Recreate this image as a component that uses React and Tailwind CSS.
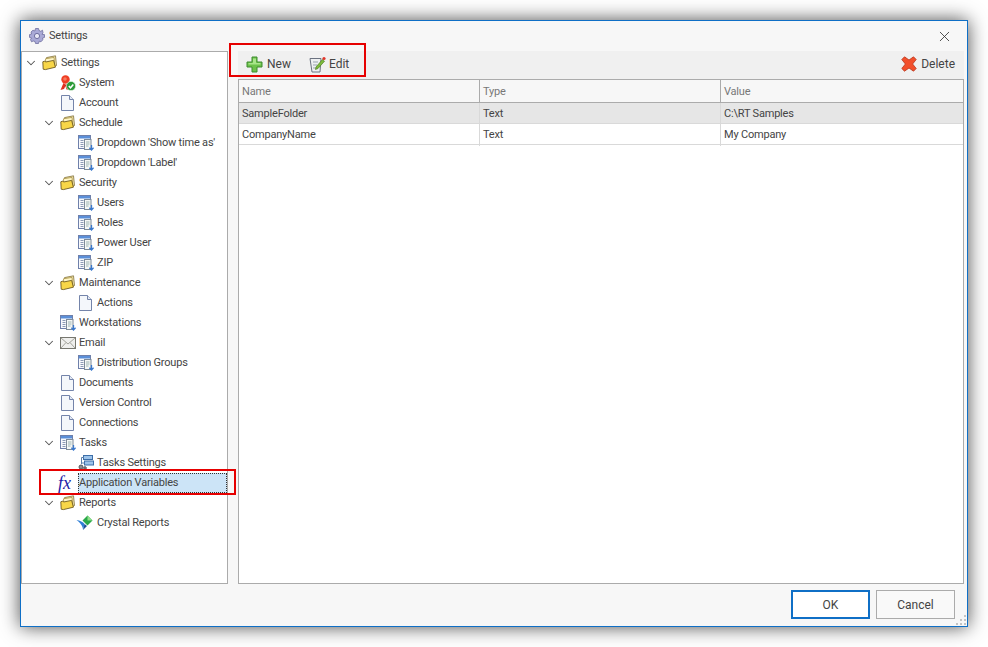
import React from "react";
import { ChevronDown, X } from "lucide-react";

const FolderIcon = () => (
  <svg width="16" height="16" viewBox="0 0 16 16" className="shrink-0">
    <path d="M4.5 4 L4.5 2.6 L13.5 0.8 L14.5 10.5 L12.5 11.5 Z" fill="#f3e6ae" stroke="#80703a" strokeWidth="0.8" />
    <path d="M3.5 5 L3.5 3.8 L12 2.4 L12.8 11.5 L4 13 Z" fill="#fff6c8" stroke="#a08a3a" strokeWidth="0.7" />
    <path d="M0.8 6.8 L2.8 6 L3.6 7 L11.6 5.4 L13.4 12.2 L3.4 14.6 L1.2 14.2 Z" fill="#f8d648" stroke="#6e5a20" strokeWidth="0.9" />
  </svg>
);

const DocIcon = () => (
  <svg width="16" height="16" viewBox="0 0 16 16" className="shrink-0">
    <path d="M1.5 0.5 H9.5 L13.5 4.5 V15.5 H1.5 Z" fill="#f4f7fb" stroke="#7484aa" />
    <path d="M9.5 0.5 V4.5 H13.5" fill="#e3e9f4" stroke="#7484aa" />
  </svg>
);

const ListDocIcon = () => (
  <svg width="16" height="16" viewBox="0 0 16 16" className="shrink-0">
    <rect x="0.5" y="0.5" width="12" height="13" fill="#f8f9fc" stroke="#6f80aa" />
    <rect x="1" y="1" width="11" height="2.5" fill="#5b8fd8" />
    <path d="M2.5 5.5 H5.5 M2.5 7.5 H5.5 M2.5 9.5 H5.5 M2.5 11.5 H5.5" stroke="#8d9ab5" />
    <rect x="6.5" y="4.5" width="6.5" height="10" fill="#f5f7f5" stroke="#7d8a98" />
    <path d="M8 7 H11.5 M8 9 H11.5 M8 11 H10.5" stroke="#9db4b4" />
    <path d="M13.5 10 V14 M11.4 12.8 L13.5 15 L15.6 12.8" fill="none" stroke="#3a78cc" strokeWidth="1.3" />
  </svg>
);

const SystemIcon = () => (
  <svg width="16" height="16" viewBox="0 0 16 16" className="shrink-0">
    <path d="M3.5 8 L0.5 15 L4 14 L6 10 Z" fill="#e0301e" />
    <path d="M6.5 9 L9 14.5 L6.5 14.5 L5 10 Z" fill="#c9281a" />
    <circle cx="5.5" cy="4.5" r="4.2" fill="#ef3e24" />
    <circle cx="5" cy="4" r="1.8" fill="#f77a5e" />
    <circle cx="11" cy="11" r="4.6" fill="#2c9a37" stroke="#e8f5e8" strokeWidth="0.6" />
    <path d="M8.8 11 L10.5 12.8 L13.3 9.4" fill="none" stroke="#fff" strokeWidth="1.5" />
  </svg>
);

const MailIcon = () => (
  <svg width="16" height="16" viewBox="0 0 16 16" className="shrink-0">
    <rect x="0.5" y="2.5" width="15" height="11" fill="#efefed" stroke="#77776f" />
    <path d="M1 3 L8 9 L15 3 M1 13 L6 7.5 M15 13 L10 7.5" fill="none" stroke="#a3a39b" />
  </svg>
);

const TaskSettingsIcon = () => (
  <svg width="16" height="16" viewBox="0 0 16 16" className="shrink-0">
    <rect x="5.5" y="0.5" width="9" height="4" fill="#9cc3ea" stroke="#3d6ea8" />
    <rect x="6.5" y="6" width="9" height="4" fill="#9cc3ea" stroke="#3d6ea8" />
    <path d="M6 2.5 H3.5 V9 M3.5 8 H6.5" fill="none" stroke="#5a7ea8" />
    <circle cx="3" cy="12" r="2" fill="#8b8f96" stroke="#55585e" />
    <circle cx="7" cy="13" r="1.3" fill="#8b8f96" stroke="#55585e" />
  </svg>
);

const CrystalIcon = () => (
  <svg width="18" height="16" viewBox="0 0 18 16" className="shrink-0 ml-[-2px]">
    <path d="M0.5 5 C4 5.5 7 7 8.5 9 L7 15 C7 11 4 7.5 0.5 5 Z" fill="#2f7fd6" />
    <path d="M8.5 9 L11 11 L7 15 Z" fill="#1b4f96" />
    <path d="M11.5 0.5 L16.5 5.5 L11.5 10.5 L6.5 5.5 Z" fill="#2aa84a" />
    <path d="M11.5 0.5 L16.5 5.5 L11.5 5.5 Z" fill="#8fe08a" />
  </svg>
);

const FxIcon = () => (
  <span className="ml-[-2px] w-4 shrink-0 font-['Liberation_Serif',serif] text-[18px] italic leading-none tracking-normal text-[#1c1ca8]">
    fx
  </span>
);

const icons = {
  folder: FolderIcon,
  doc: DocIcon,
  list: ListDocIcon,
  system: SystemIcon,
  mail: MailIcon,
  tasks: TaskSettingsIcon,
  crystal: CrystalIcon,
  fx: FxIcon,
};

const treeItems = [
  { label: "Settings", icon: "folder", level: 0, open: true },
  { label: "System", icon: "system", level: 1 },
  { label: "Account", icon: "doc", level: 1 },
  { label: "Schedule", icon: "folder", level: 1, open: true },
  { label: "Dropdown 'Show time as'", icon: "list", level: 2 },
  { label: "Dropdown 'Label'", icon: "list", level: 2 },
  { label: "Security", icon: "folder", level: 1, open: true },
  { label: "Users", icon: "list", level: 2 },
  { label: "Roles", icon: "list", level: 2 },
  { label: "Power User", icon: "list", level: 2 },
  { label: "ZIP", icon: "list", level: 2 },
  { label: "Maintenance", icon: "folder", level: 1, open: true },
  { label: "Actions", icon: "doc", level: 2 },
  { label: "Workstations", icon: "list", level: 1 },
  { label: "Email", icon: "mail", level: 1, open: true },
  { label: "Distribution Groups", icon: "list", level: 2 },
  { label: "Documents", icon: "doc", level: 1 },
  { label: "Version Control", icon: "doc", level: 1 },
  { label: "Connections", icon: "doc", level: 1 },
  { label: "Tasks", icon: "list", level: 1, open: true },
  { label: "Tasks Settings", icon: "tasks", level: 2 },
  { label: "Application Variables", icon: "fx", level: 1, selected: true },
  { label: "Reports", icon: "folder", level: 1, open: true },
  { label: "Crystal Reports", icon: "crystal", level: 2 },
];

const levelPadding = ["pl-[2px]", "pl-[20px]", "pl-[38px]"];

const rows = [
  { name: "SampleFolder", type: "Text", value: "C:\\RT Samples", active: true },
  { name: "CompanyName", type: "Text", value: "My Company" },
];

const TreeRow = ({ item }) => {
  const Icon = icons[item.icon];
  return (
    <div className={`flex h-5 items-center whitespace-nowrap ${levelPadding[item.level]}`}>
      <span className="flex w-[14px] shrink-0 justify-center">
        {item.open && <ChevronDown size={14} strokeWidth={1.8} className="text-[#555]" />}
      </span>
      <span className="flex w-[22px] shrink-0 items-center pl-[4px]">
        <Icon />
      </span>
      {item.selected ? (
        <span className="flex h-5 flex-1 items-center border border-dotted border-[#333] bg-[#cce4f7]">
          {item.label}
        </span>
      ) : (
        <span className="pl-px">{item.label}</span>
      )}
    </div>
  );
};

const App = () => {
  return (
    <div className="h-[647px] w-[988px] overflow-hidden bg-white p-5 font-['Roboto',sans-serif] text-[11px] tracking-[-0.2px] text-[#444]">
      <div className="relative flex h-[607px] w-[948px] flex-col border border-[#0f6fc6] bg-[#f7f7f7] shadow-[0_0_18px_rgba(0,0,0,0.7)]">
        <div className="flex h-[30px] items-center justify-between pl-[8px] pr-[14px]">
          <div className="flex items-center gap-[4px]">
            <svg width="16" height="16" viewBox="0 0 16 16">
              <path
                d="M6.5 0.5 H9.5 L10 2.5 L11.8 3.3 L13.5 2.2 L14 4.8 L13 6.3 L15.5 6.6 V9.4 L13.6 10 L13.8 11.8 L12 13.8 L10.2 13.2 L9.5 15.5 H6.5 L6 13.5 L4.2 13 L2.5 13.8 L1.5 11.5 L2.6 10 L0.5 9.4 V6.6 L2.6 6 L2 4 L4 2.2 L5.8 3 Z"
                fill="#a9a9d6"
                stroke="#6f6f9f"
                strokeWidth="0.8"
              />
              <circle cx="8" cy="8" r="2.6" fill="#e9e9f6" stroke="#6f6f9f" />
            </svg>
            <span className="pt-px">Settings</span>
          </div>
          <X size={17} strokeWidth={1.2} className="text-[#333]" />
        </div>

        <div className="flex h-[533px]">
          <div className="w-[207px] border border-[#ababab] bg-white pt-px">
            {treeItems.map((item) => (
              <TreeRow key={item.label} item={item} />
            ))}
          </div>

          <div className="ml-[10px] mr-[3px] flex flex-1 flex-col">
            <div className="flex h-7 items-center justify-between bg-[#f0f0f0] pb-[2px] pl-[8px] pr-[9px] text-[12px] tracking-normal">
              <div className="flex items-center">
                <button className="flex items-center gap-[4px]">
                  <svg width="17" height="17" viewBox="0 0 17 17">
                    <path
                      d="M6 1 H11 V6 H16 V11 H11 V16 H6 V11 H1 V6 H6 Z"
                      fill="#6cc24a"
                      stroke="#3c8a2e"
                      strokeLinejoin="round"
                    />
                    <path d="M7 2.5 H10 V7 H14.5 V8.5 H2.5 V7 H7 Z" fill="#a8e58a" />
                  </svg>
                  New
                </button>
                <button className="ml-[18px] flex items-center gap-[3px]">
                  <svg width="17" height="17" viewBox="0 0 17 17">
                    <path d="M1 2.5 H12 L11 16 H3 Z" fill="#eef0f2" stroke="#6b7280" />
                    <path d="M4 6 H9 M4 9 H8 M4 12 H7" stroke="#9aa5b1" />
                    <path d="M7 11 L13.5 3.5 L15.5 5.2 L9 12.5 L6.5 13.5 Z" fill="#7dbb3c" stroke="#4d7f24" strokeWidth="0.7" />
                    <circle cx="15" cy="2.5" r="1.6" fill="#e0352b" />
                  </svg>
                  Edit
                </button>
              </div>
              <button className="flex items-center gap-[4px]">
                <svg width="16" height="16" viewBox="0 0 16 16">
                  <path
                    d="M0.8 3.5 L3.5 0.8 L8 4 L12.5 0.8 L15.2 3.5 L11.6 8 L15.2 12.5 L12.5 15.2 L8 12 L3.5 15.2 L0.8 12.5 L4.4 8 Z"
                    fill="#f2502c"
                    stroke="#b8351a"
                    strokeWidth="0.8"
                    strokeLinejoin="round"
                  />
                </svg>
                Delete
              </button>
            </div>

            <div className="flex-1 border border-[#ababab] bg-white">
              <div className="grid h-[23px] grid-cols-[240px_241px_1fr] items-center border-b border-[#ababab] bg-[#f7f7f7] text-[#777]">
                <span className="pl-[3px] pt-px">Name</span>
                <span className="h-full border-l border-[#ababab] pl-[3px] leading-[24px]">Type</span>
                <span className="h-full border-l border-[#ababab] pl-[3px] leading-[24px]">Value</span>
              </div>
              {rows.map((row) => (
                <div
                  key={row.name}
                  className={`grid h-[21px] grid-cols-[240px_241px_1fr] border-b border-[#d9d9d9] leading-[22px] ${
                    row.active ? "bg-[#e6e6e6]" : "bg-white"
                  }`}
                >
                  <span className="pl-[3px]">{row.name}</span>
                  <span className="border-l border-[#d9d9d9] pl-[3px]">{row.type}</span>
                  <span className="border-l border-[#d9d9d9] pl-[3px]">{row.value}</span>
                </div>
              ))}
            </div>
          </div>
        </div>

        <div className="flex h-[42px] items-start justify-end gap-[6px] pr-[12px] pt-[6px] text-[12px] tracking-normal">
          <button className="h-[29px] w-[79px] border-2 border-[#0f6fc6] bg-white pt-px">OK</button>
          <button className="h-[29px] w-[79px] border border-[#ababab] bg-[#f9f9f9] pt-px">Cancel</button>
        </div>

        {/* red annotation boxes sit over the dialog */}
        <div className="absolute left-[208px] top-[22px] h-[34px] w-[137px] border-2 border-[#e60000]" />
        <div className="absolute left-[18px] top-[448px] h-[26px] w-[197px] border-2 border-[#e60000]" />

        <svg width="12" height="12" viewBox="0 0 12 12" className="absolute bottom-0 right-0">
          <path d="M9 1 h2 v2 h-2 Z M5 5 h2 v2 h-2 Z M9 5 h2 v2 h-2 Z M1 9 h2 v2 h-2 Z M5 9 h2 v2 h-2 Z M9 9 h2 v2 h-2 Z" fill="#c4c4c4" />
        </svg>
      </div>
    </div>
  );
};

export default App;
